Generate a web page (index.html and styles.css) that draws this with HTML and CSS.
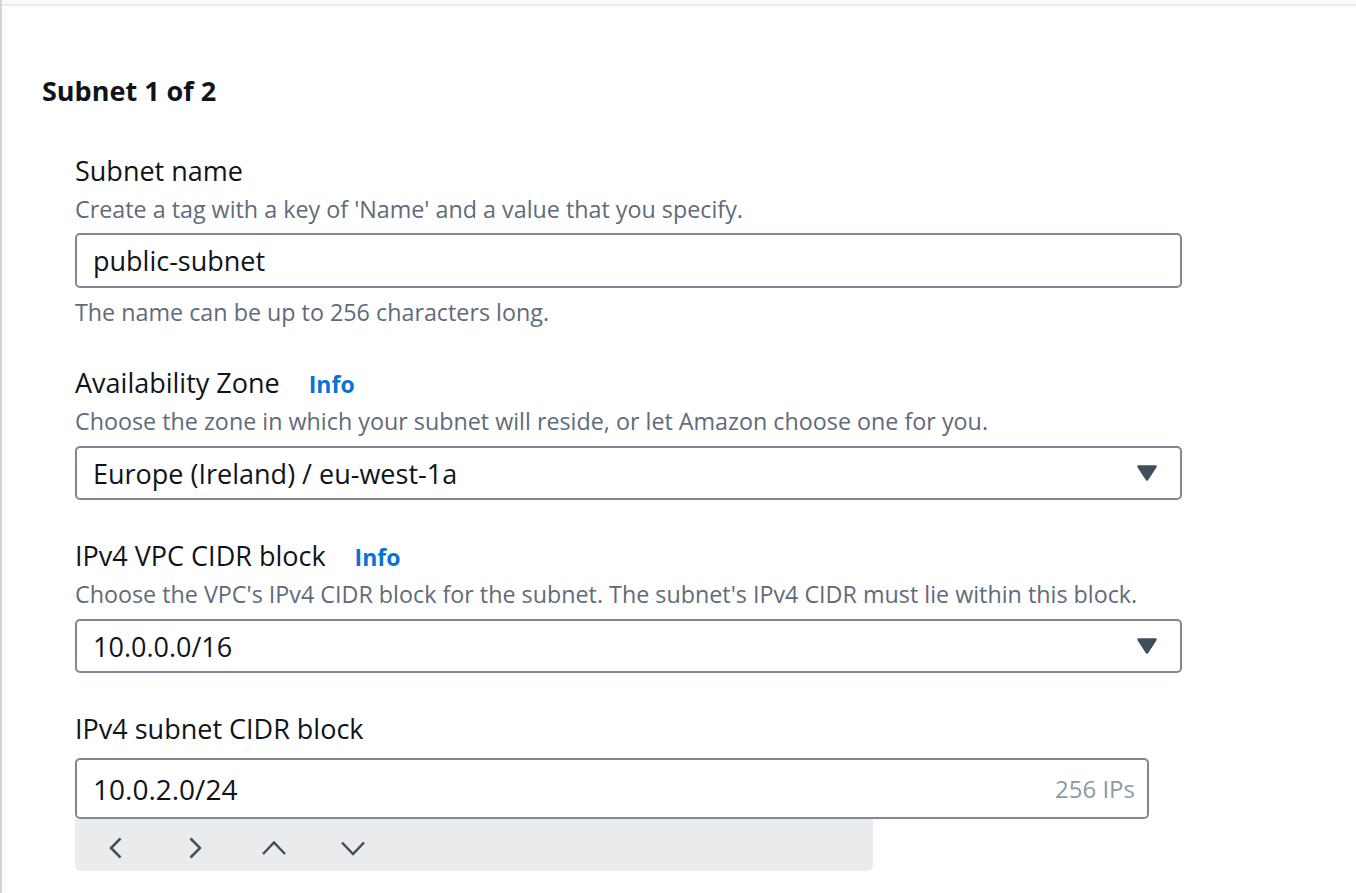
FILE: index.html
```html
<!DOCTYPE html>
<html lang="en">
<head>
<meta charset="utf-8">
<title>Subnet settings</title>
<link rel="stylesheet" href="styles.css">
</head>
<body>
<div class="page">
  <div class="topbar"></div>
  <section class="subnet">
    <h2 class="subnet-title">Subnet 1 of 2</h2>

    <div class="field">
      <div class="label">Subnet name</div>
      <div class="desc">Create a tag with a key of 'Name' and a value that you specify.</div>
      <div class="control input"><span class="value">public-subnet</span></div>
      <div class="help">The name can be up to 256 characters long.</div>
    </div>

    <div class="field">
      <div class="label">Availability Zone<a class="info">Info</a></div>
      <div class="desc">Choose the zone in which your subnet will reside, or let Amazon choose one for you.</div>
      <div class="control select">
        <span class="value">Europe (Ireland) / eu-west-1a</span>
        <svg class="caret" width="22" height="18" viewBox="0 0 22 18"><path d="M2.5 2.5 H19.5 L11 15.5 Z" fill="#414d5c" stroke="#414d5c" stroke-width="2.5" stroke-linejoin="round"/></svg>
      </div>
    </div>

    <div class="field">
      <div class="label">IPv4 VPC CIDR block<a class="info">Info</a></div>
      <div class="desc">Choose the VPC's IPv4 CIDR block for the subnet. The subnet's IPv4 CIDR must lie within this block.</div>
      <div class="control select">
        <span class="value">10.0.0.0/16</span>
        <svg class="caret" width="22" height="18" viewBox="0 0 22 18"><path d="M2.5 2.5 H19.5 L11 15.5 Z" fill="#414d5c" stroke="#414d5c" stroke-width="2.5" stroke-linejoin="round"/></svg>
      </div>
    </div>

    <div class="field">
      <div class="label label-tight">IPv4 subnet CIDR block</div>
      <div class="control input cidr">
        <span class="value">10.0.2.0/24</span>
        <span class="suffix">256 IPs</span>
      </div>
      <div class="stepper">
        <button class="step" aria-label="Previous"><svg width="24" height="24" viewBox="0 0 24 24"><path d="M16.5 2.5 L7 12 L16.5 21.5" fill="none" stroke="#414d5c" stroke-width="2.5"/></svg></button>
        <button class="step" aria-label="Next"><svg width="24" height="24" viewBox="0 0 24 24"><path d="M7.5 2.5 L17 12 L7.5 21.5" fill="none" stroke="#414d5c" stroke-width="2.5"/></svg></button>
        <button class="step" aria-label="Up"><svg width="24" height="24" viewBox="0 0 24 24"><path d="M1 18 L12 6.5 L23 18" fill="none" stroke="#414d5c" stroke-width="2.5"/></svg></button>
        <button class="step" aria-label="Down"><svg width="24" height="24" viewBox="0 0 24 24"><path d="M1 6.5 L12 18 L23 6.5" fill="none" stroke="#414d5c" stroke-width="2.5"/></svg></button>
      </div>
    </div>
  </section>
</div>
</body>
</html>
```

FILE: styles.css
```css
html, body {
  margin: 0;
  padding: 0;
  background: #ffffff;
}

body {
  font-family: "Open Sans", "Noto Sans", Arial, sans-serif;
  color: #0f141a;
}

.page {
  min-height: 893px;
  border-left: 2px solid #d1d5db;
  box-sizing: border-box;
}

.topbar {
  height: 4px;
  background: #fafafa;
  border-bottom: 2px solid #e9ebed;
}

.subnet {
  padding: 68px 0 0 40px;
}

.subnet-title {
  margin: 0;
  font-size: 27px;
  line-height: 34px;
  font-weight: 700;
  color: #0f141a;
}

.field {
  margin-left: 33px;
  margin-top: 39px;
}

.subnet-title + .field {
  margin-top: 46px;
}

.label {
  font-size: 27px;
  line-height: 34px;
  height: 34px;
  color: #0f141a;
}

.info {
  margin-left: 29px;
  color: #0972d3;
  font-weight: 700;
  font-size: 23px;
  line-height: 20px;
  text-decoration: none;
}

.desc {
  margin-top: 6px;
  font-size: 23.3px;
  line-height: 30px;
  color: #5f6b7a;
}

.help {
  margin-top: 9px;
  font-size: 23.3px;
  line-height: 30px;
  color: #5f6b7a;
}

.control {
  box-sizing: border-box;
  width: 1107px;
  height: 55px;
  margin-top: 9px;
  border: 2px solid #7d8998;
  border-radius: 5px;
  display: flex;
  align-items: center;
  padding: 0 16px;
  font-size: 27px;
  color: #0f141a;
}

.select {
  height: 54px;
  margin-top: 10px;
  justify-content: space-between;
  padding-right: 22px;
}

.caret {
  display: block;
}

.label-tight + .control {
  margin-top: 12px;
}

.cidr {
  width: 1074px;
  height: 61px;
  justify-content: space-between;
  padding-right: 12px;
  font-size: 28px;
}

.suffix {
  font-size: 24px;
  color: #8c9aa5;
}

.stepper {
  width: 798px;
  height: 52px;
  background: #e9ebed;
  border-radius: 0 0 6px 6px;
  display: flex;
  align-items: center;
  padding: 6px 0 0 1px;
  box-sizing: border-box;
}

.step {
  width: 79px;
  height: 40px;
  border: 0;
  background: transparent;
  padding: 0;
  display: flex;
  align-items: center;
  justify-content: center;
}

.step svg {
  display: block;
}
```
